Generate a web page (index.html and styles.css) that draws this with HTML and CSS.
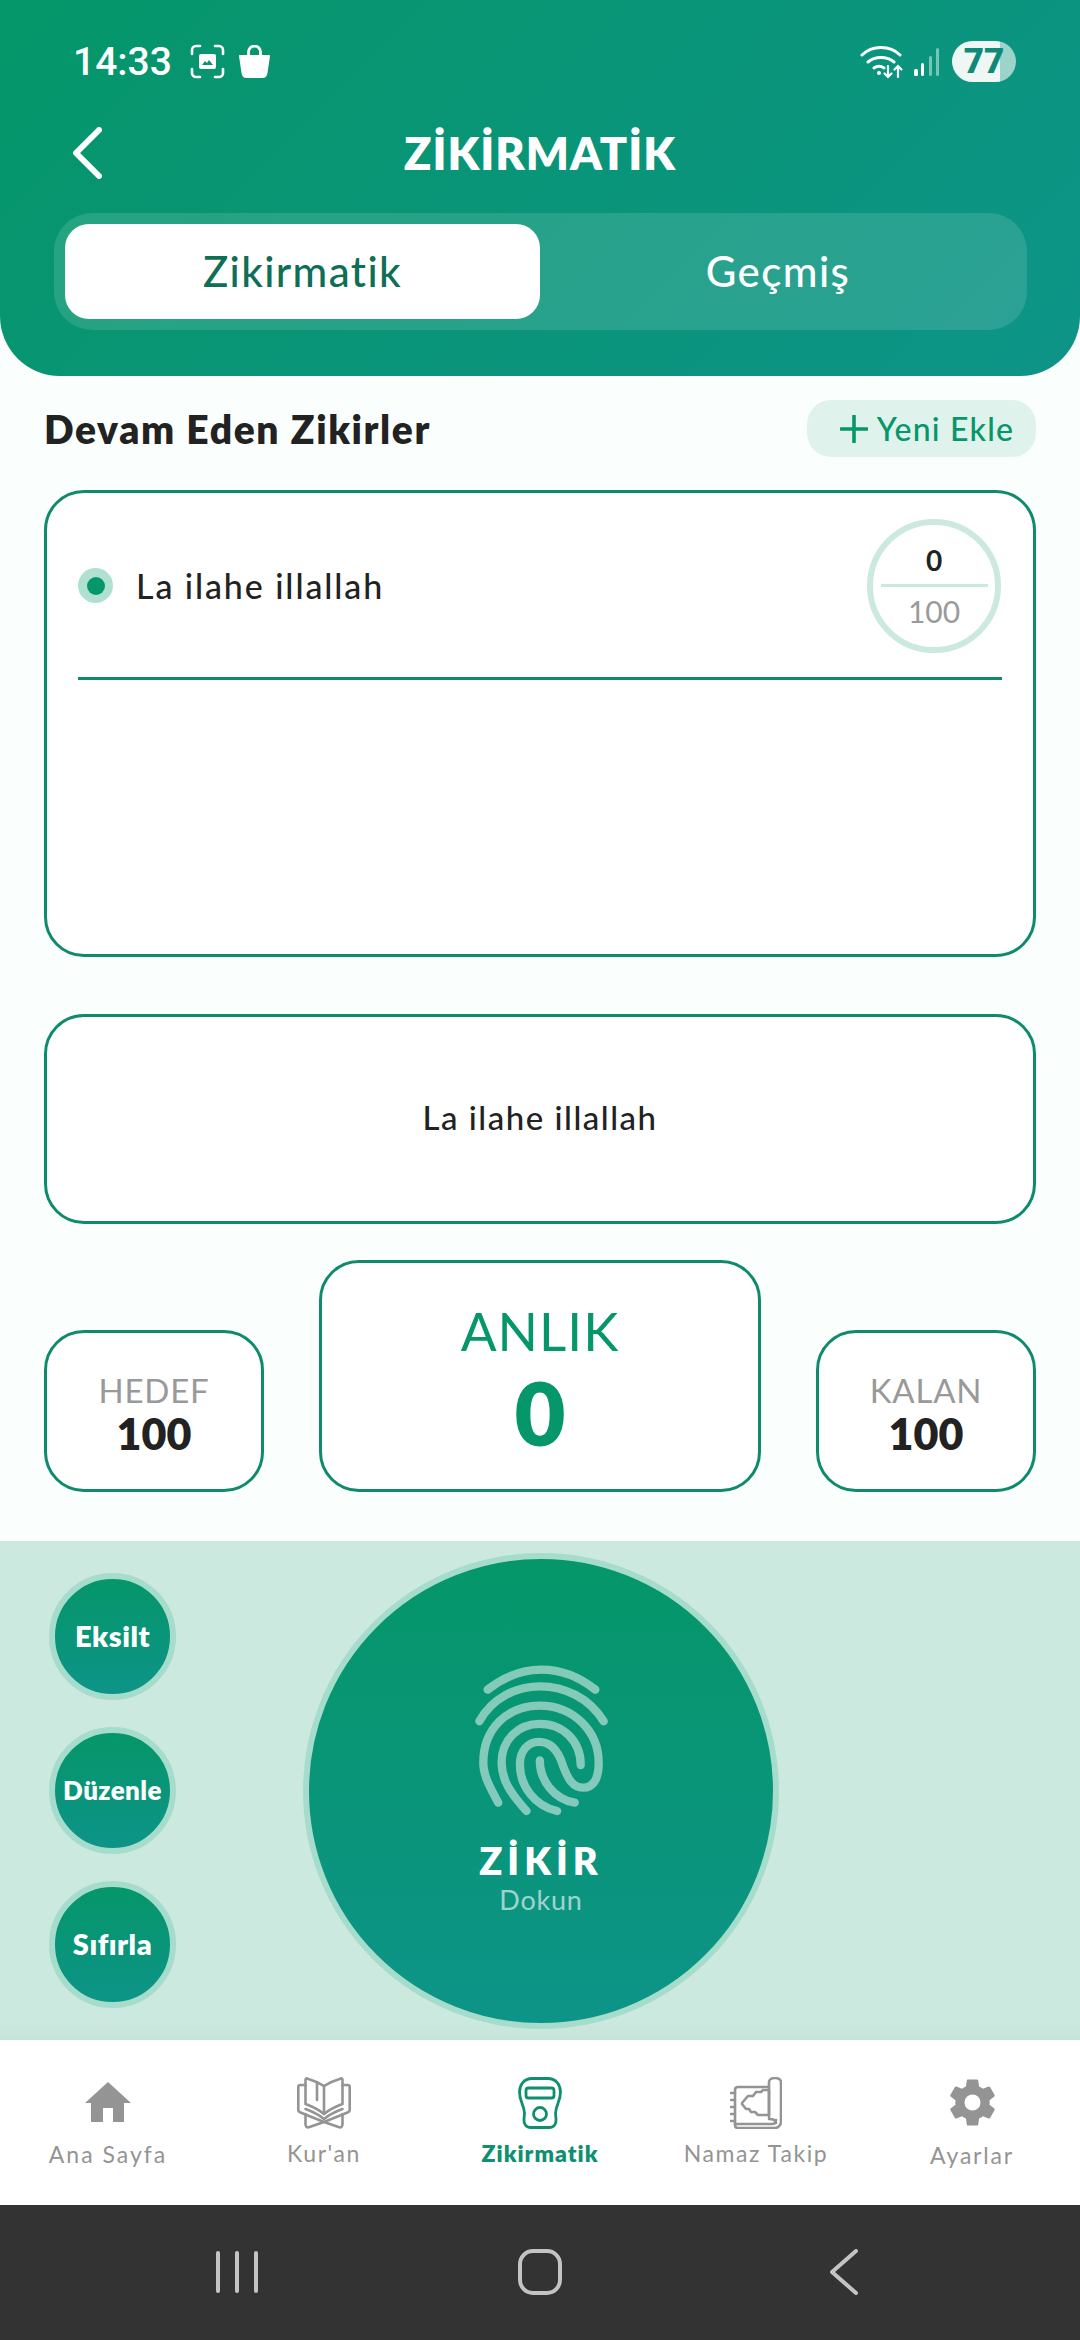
FILE: index.html
```html
<!DOCTYPE html>
<html lang="tr">
<head>
<meta charset="utf-8">
<title>Zikirmatik</title>
<link rel="stylesheet" href="styles.css">
</head>
<body>
<div class="app">
  <header class="header">
    <div class="status">
      <span class="time">14:33</span>
      <svg class="st-shot" viewBox="0 0 35 35" fill="none" stroke="#fff" stroke-width="2.6" stroke-linecap="round"><path d="M2 10V6a4 4 0 0 1 4-4h4M25 2h4a4 4 0 0 1 4 4v4M33 25v4a4 4 0 0 1-4 4h-4M10 33H6a4 4 0 0 1-4-4v-4"/><rect x="9" y="10" width="17" height="15" rx="2" fill="#fff" stroke="none"/><path d="M12 21l3-4 2 2 2-3 4 5z" fill="#0a9474" stroke="none"/></svg>
      <svg class="st-bag" viewBox="0 0 31 33"><path d="M9.5 10V7a6 6 0 0 1 12 0v3" fill="none" stroke="#fff" stroke-width="2.8"/><path d="M1 10h29c.6 0 1 .5 1 1l-2.500 17c-.4 3-2 5-5 5H7.500c-3 0-4.600-2-5-5L0 11c0-.5.4-1 1-1z" fill="#fff"/></svg>
      <span class="st-gap"></span>
      <svg class="st-wifi" viewBox="0 0 44 34" fill="none" stroke="#fff" stroke-width="3" stroke-linecap="round"><path d="M2 10c10-10 28-10 38 0M8 17c7-6 19-6 26 0M14 23c3-2 7-2 10 0"/><circle cx="19" cy="28" r="2" fill="#fff" stroke="none"/><path d="M28 21v11M24.500 28.500l3.500 3.500 3.500-3.500M38 32V21M34.500 24.500l3.500-3.500 3.500 3.500" stroke-width="2.200"/></svg>
      <svg class="st-signal" viewBox="0 0 26 28"><rect x="0" y="21" width="4" height="7" rx="1.500" fill="#fff"/><rect x="7" y="15" width="3" height="13" rx="1.500" fill="#fff"/><rect x="15" y="8" width="3" height="20" rx="1.500" fill="#fff" fill-opacity=".45"/><rect x="22" y="0" width="3" height="28" rx="1.500" fill="#fff" fill-opacity=".45"/></svg>
      <span class="battery">77</span>
    </div>
    <div class="titlebar">
      <svg class="back" viewBox="0 0 30 52" fill="none" stroke="#fff" stroke-width="6" stroke-linecap="round" stroke-linejoin="round"><path d="M27 3L4 26l23 23"/></svg>
      <h1 class="title">ZİKİRMATİK</h1>
    </div>
    <div class="tabs">
      <div class="tab tab-active">Zikirmatik</div>
      <div class="tab">Geçmiş</div>
    </div>
  </header>

  <main class="content">
    <div class="section-head">
      <h2 class="section-title">Devam Eden Zikirler</h2>
      <div class="add-btn">
        <svg class="plus" viewBox="0 0 28 28" stroke="#059669" stroke-width="3.600" stroke-linecap="round"><path d="M14 1v26M1 14h26"/></svg>
        <span>Yeni Ekle</span>
      </div>
    </div>

    <section class="card list-card">
      <div class="list-row">
        <span class="radio"><span class="radio-dot"></span></span>
        <span class="row-name">La ilahe illallah</span>
        <div class="ring">
          <span class="ring-num">0</span>
          <span class="ring-line"></span>
          <span class="ring-total">100</span>
        </div>
      </div>
      <div class="list-rule"></div>
    </section>

    <section class="card phrase-card">La ilahe illallah</section>

    <section class="stats">
      <div class="card stat">
        <span class="stat-label">HEDEF</span>
        <span class="stat-value">100</span>
      </div>
      <div class="card stat-main">
        <span class="main-label">ANLIK</span>
        <span class="main-value">0</span>
      </div>
      <div class="card stat">
        <span class="stat-label">KALAN</span>
        <span class="stat-value">100</span>
      </div>
    </section>
  </main>

  <section class="panel">
    <div class="side-btns">
      <div class="side-btn">Eksilt</div>
      <div class="side-btn side-btn-sm">Düzenle</div>
      <div class="side-btn">Sıfırla</div>
    </div>
    <div class="tap-btn">
      <svg class="finger" viewBox="100 78 400 460" fill="none" stroke="#fff" stroke-opacity=".5" stroke-width="25" stroke-linecap="round" stroke-linejoin="round">
        <path d="M138 155C240 75 360 75 462 155"/>
        <path d="M113 250C190 110 400 110 487 250"/>
        <path d="M170 495C140 440 125 410 125 375C125 270 200 203 295 203C395 203 472 280 472 375C472 425 455 450 425 450C395 450 380 425 365 385C350 335 325 312 292 312C258 312 235 340 235 380C235 445 280 505 347 520"/>
        <path d="M255 520C205 465 180 425 180 375C180 305 230 258 295 258C365 258 418 310 418 382"/>
        <path d="M400 495C340 485 295 430 295 368"/>
      </svg>
      <span class="tap-title">ZİKİR</span>
      <span class="tap-sub">Dokun</span>
    </div>
  </section>

  <nav class="tabbar">
    <div class="nav-item">
      <svg class="nav-ic ic-home" viewBox="0 0 46 40" fill="#949494"><path d="M23 0L46 21H39V40H28V26H18V40H6V21H0z"/></svg>
      <span class="nav-label nav-home">Ana Sayfa</span>
    </div>
    <div class="nav-item">
      <svg class="nav-ic ic-book" viewBox="0 0 54 52" fill="none" stroke="#949494" stroke-width="2.600" stroke-linejoin="round" stroke-linecap="round"><path d="M27 9C22 6 15 3 10 1.500C9 1.200 8.500 2 8.500 3V27C14 29 21 32 27 37C33 32 40 29 45.500 27V3C45.500 2 45 1.200 44 1.500C39 3 32 6 27 9Z"/><path d="M27 9V37M20 6V23M8.500 32C14 34 21 37 27 42C33 37 40 34 45.500 32"/><path d="M8.500 8H3.500C2 8 1.300 9 1.300 10V33C1.300 34 2 35 3.500 35.500L27 45L50.500 35.500C52 35 52.700 34 52.700 33V10C52.700 9 52 8 50.500 8H45.500"/><path d="M8.500 37V47C8.500 50 10 51 12.500 50L27 45L41.500 50C44 51 45.500 50 45.500 47V37"/></svg>
      <span class="nav-label">Kur'an</span>
    </div>
    <div class="nav-item nav-active">
      <svg class="nav-ic ic-counter" viewBox="0 0 44 52" fill="none" stroke="#0e9070" stroke-width="2.800"><path d="M14 1.500H30C38 1.500 42.500 8 42.500 15C42.500 24 38 28 37.500 36L38 42C38.500 47 36 50.500 31 50.500H13C8 50.500 5.500 47 6 42L6.500 36C6 28 1.500 24 1.500 15C1.500 8 6 1.500 14 1.500Z"/><rect x="8" y="11" width="28" height="10" rx="2.500"/><circle cx="22" cy="37" r="6.500"/></svg>
      <span class="nav-label">Zikirmatik</span>
    </div>
    <div class="nav-item">
      <svg class="nav-ic ic-namaz" viewBox="0 0 52 52" fill="none" stroke="#949494" stroke-width="2.600" stroke-linejoin="round" stroke-linecap="round"><path d="M39 10H8C6 10 5 11 5 13V48C5 50 6 51 8 51H45C48 51 51 48 51 45V5C51 3 49 1 45 1C41 1 39 3 39 5V40"/><path d="M39 42C44 42 46 44 46 46"/><path d="M5 47H42C45 47 46 45 46 43"/><path d="M39 13V38H28L25 35H21L19 32H16L12 27L12 26L18 19H23L26 15H31L33 13Z"/><path d="M1 16H5M1 23H5M1 30H5M1 37H5M1 44H5"/></svg>
      <span class="nav-label">Namaz Takip</span>
    </div>
    <div class="nav-item">
      <svg class="nav-ic ic-gear" viewBox="0 0 24 24" fill="#949494"><path fill-rule="evenodd" d="M19.430 12.980c.04-.32.07-.64.07-.98s-.03-.66-.07-.98l2.110-1.650c.19-.15.24-.42.12-.64l-2-3.460c-.12-.22-.39-.3-.61-.22l-2.490 1c-.52-.4-1.080-.73-1.690-.98l-.38-2.650A.49.49 0 0 0 14 2h-4c-.25 0-.46.18-.49.420l-.38 2.650c-.61.25-1.170.59-1.690.98l-2.490-1c-.23-.09-.49 0-.61.22l-2 3.460c-.13.22-.07.49.12.64l2.110 1.650c-.04.32-.07.65-.07.98s.03.66.07.98l-2.110 1.650c-.19.15-.24.42-.12.64l2 3.460c.12.22.39.3.61.22l2.490-1c.52.4 1.080.73 1.690.98l.38 2.650c.03.24.24.42.49.42h4c.25 0 .46-.18.49-.42l.38-2.650c.61-.25 1.170-.59 1.690-.98l2.490 1c.23.09.49 0 .61-.22l2-3.460c.12-.22.07-.49-.12-.64l-2.110-1.650zM12 15.500a3.500 3.500 0 1 1 0-7 3.500 3.500 0 0 1 0 7z"/></svg>
      <span class="nav-label nav-gear">Ayarlar</span>
    </div>
  </nav>

  <footer class="sysbar">
    <svg class="sys-menu" viewBox="0 0 42 42" stroke="#c4c4c4" stroke-width="4" stroke-linecap="round"><path d="M2 2V40M21 2V40M40 2V40"/></svg>
    <svg class="sys-home" viewBox="0 0 44 46" fill="none" stroke="#c4c4c4" stroke-width="4"><rect x="2" y="2" width="40" height="42" rx="13"/></svg>
    <svg class="sys-back" viewBox="0 0 28 46" fill="none" stroke="#c4c4c4" stroke-width="4" stroke-linecap="round" stroke-linejoin="round"><path d="M26 2L2 23l24 21"/></svg>
  </footer>
</div>
</body>
</html>
```
FILE: styles.css
```css
* { box-sizing: border-box; margin: 0; padding: 0; }
html, body { width: 1080px; height: 2340px; overflow: hidden; }
body { font-family: "Lato", "Noto Sans", sans-serif; background: #fafffd; color: #222; }
.app { width: 1080px; height: 2340px; display: flex; flex-direction: column; }

.header {
  height: 376px;
  padding: 41px 54px 0;
  background: linear-gradient(135deg, #059669, #0d9488);
  border-radius: 0 0 60px 60px;
  flex: none;
}
.status { display: flex; align-items: center; height: 41px; padding: 0 10px 0 19px; }
.time { font-family: "Roboto", sans-serif; font-weight: 500; font-size: 39px; color: #fff; width: 117px; }
.st-shot { width: 35px; height: 35px; }
.st-bag { width: 31px; height: 33px; margin-left: 14px; }
.st-gap { flex: 1; }
.st-wifi { width: 44px; height: 34px; }
.st-signal { width: 26px; height: 28px; margin-left: 10px; }
.battery {
  width: 64px; height: 41px; margin-left: 12px; border-radius: 21px;
  background: linear-gradient(90deg, #eff7f5 75%, #9cd4c9 75%);
  color: #0d8a78; font-family: "Roboto", sans-serif; font-weight: 900; font-size: 35px;
  display: flex; align-items: center; justify-content: center;
}

.titlebar { height: 131px; display: flex; align-items: flex-start; justify-content: center; position: relative; padding-top: 49px; }
.back { position: absolute; left: 18px; top: 45px; width: 30px; height: 52px; }
.title { font-size: 45px; font-weight: 800; color: #fff; line-height: 1; letter-spacing: 1px; }

.tabs {
  height: 117px; padding: 11px; width: 973px;
  display: grid; grid-template-columns: 475px 1fr; border-radius: 38px;
  background: rgba(255,255,255,.125);
}
.tab { display: flex; align-items: center; justify-content: center; font-size: 42px; font-weight: 500; color: #fff; border-radius: 24px; letter-spacing: 1.400px; padding-bottom: 2px; }
.tab-active { background: #fff; color: #0f6e56; }

.content { flex: 1; padding: 24px 44px 0; display: flex; flex-direction: column; }
.section-head { display: flex; align-items: center; justify-content: space-between; height: 57px; }
.section-title { font-size: 39px; font-weight: 800; color: #222; letter-spacing: 1.600px; }
.add-btn {
  width: 229px; height: 57px; border-radius: 24px; background: #dff3ec; padding-left: 11px;
  display: flex; align-items: center; justify-content: center; gap: 9px;
  font-size: 32px; font-weight: 500; color: #059669; letter-spacing: 1.200px;
}
.plus { width: 28px; height: 28px; }

.card { background: #fff; border: 3px solid #0f8a6c; border-radius: 40px; }
.list-card { height: 467px; margin-top: 33px; padding: 24px 31px 0; }
.list-row { display: flex; align-items: center; height: 137px; }
.radio { width: 35px; height: 35px; border-radius: 50%; background: #b0e0d0; display: flex; align-items: center; justify-content: center; }
.radio-dot { width: 18px; height: 18px; border-radius: 50%; background: #059669; }
.row-name { flex: 1; margin-left: 23px; font-size: 34px; font-weight: 500; color: #222; letter-spacing: 1.900px; }
.ring {
  width: 134px; height: 134px; border-radius: 50%; border: 6px solid #cce9df; margin-right: 1px;
  display: flex; flex-direction: column; align-items: center; justify-content: center;
}
.ring-num { font-size: 28px; font-weight: 700; line-height: 40px; color: #222; }
.ring-line { width: 107px; height: 3px; background: #cce9df; margin: 4px 0; }
.ring-total { font-size: 30px; color: #9a9a9a; line-height: 40px; }
.list-rule { height: 3px; background: #0f8a6c; margin-top: 23px; }

.phrase-card {
  height: 210px; margin-top: 57px; padding-bottom: 4px;
  display: flex; align-items: center; justify-content: center;
  font-size: 33px; font-weight: 500; color: #222; letter-spacing: 1.500px;
}

.stats { margin-top: 36px; display: flex; align-items: flex-end; justify-content: space-between; height: 232px; }
.stat { width: 220px; height: 162px; padding-top: 1px; display: flex; flex-direction: column; align-items: center; justify-content: center; }
.stat-label { font-size: 33px; color: #999; line-height: 44px; letter-spacing: .8px; }
.stat-value { font-size: 43px; font-weight: 800; color: #222; line-height: 44px; }
.stat-main { width: 442px; height: 232px; padding-top: 6px; display: flex; flex-direction: column; align-items: center; justify-content: center; }
.main-label { font-size: 53px; color: #059669; line-height: 62px; letter-spacing: 1px; }
.main-value { font-size: 88px; font-weight: 800; color: #059669; line-height: 92px; margin-top: 4px; }

.panel {
  height: 499px; flex: none; background: #cce9df; padding: 12px 0 0 49px;
  display: grid; grid-template-columns: 127px 1fr;
  background-image: linear-gradient(180deg, transparent 96%, rgba(0,0,0,.025));
}
.side-btns { display: flex; flex-direction: column; gap: 27px; padding-top: 20px; }
.side-btn {
  width: 127px; height: 127px; border-radius: 50%; border: 6px solid #a6dccb; padding-bottom: 3px;
  background: linear-gradient(180deg, #059669, #0d9488);
  display: flex; align-items: center; justify-content: center;
  color: #fff; font-size: 29px; font-weight: 800; letter-spacing: .5px;
}
.side-btn-sm { font-size: 26px; letter-spacing: .4px; padding-bottom: 1px; }
.tap-btn {
  width: 476px; height: 476px; margin-left: 127px; border-radius: 50%; border: 6px solid #a6dccb;
  background: linear-gradient(180deg, #059669, #0d9488);
  display: flex; flex-direction: column; align-items: center; padding-top: 105px;
}
.finger { width: 133px; height: 153px; }
.tap-title { font-size: 38px; font-weight: 800; color: #fff; letter-spacing: 5px; line-height: 44px; margin-top: 21px; }
.tap-sub { font-size: 27px; color: #fff; opacity: .6; line-height: 36px; letter-spacing: .8px; }

.tabbar { height: 165px; flex: none; background: #fff; display: grid; grid-template-columns: repeat(5, 216px); }
.nav-item { display: flex; flex-direction: column; align-items: center; }
.nav-ic { display: block; }
.ic-home { width: 46px; height: 40px; margin-top: 42px; }
.ic-book { width: 54px; height: 52px; margin-top: 37px; }
.ic-counter { width: 44px; height: 52px; margin-top: 37px; }
.ic-namaz { width: 52px; height: 52px; margin-top: 37px; }
.ic-gear { width: 55px; height: 55px; margin-top: 35px; }
.nav-label { font-size: 23px; color: #949494; margin-top: 10px; line-height: 28px; letter-spacing: 1.600px; }
.nav-home { margin-top: 18px; letter-spacing: 2px; }
.nav-gear { margin-top: 11px; letter-spacing: 1.800px; }
.nav-active .nav-label { color: #0e9070; font-weight: 800; letter-spacing: 1px; }

.sysbar { height: 135px; flex: none; background: #333; display: grid; grid-template-columns: 1fr 1fr 1fr; align-items: center; justify-items: center; padding-bottom: 2px; }
.sys-menu { width: 42px; height: 42px; justify-self: end; margin-right: 102px; }
.sys-home { width: 44px; height: 46px; }
.sys-back { width: 28px; height: 46px; justify-self: start; margin-left: 110px; }
```
